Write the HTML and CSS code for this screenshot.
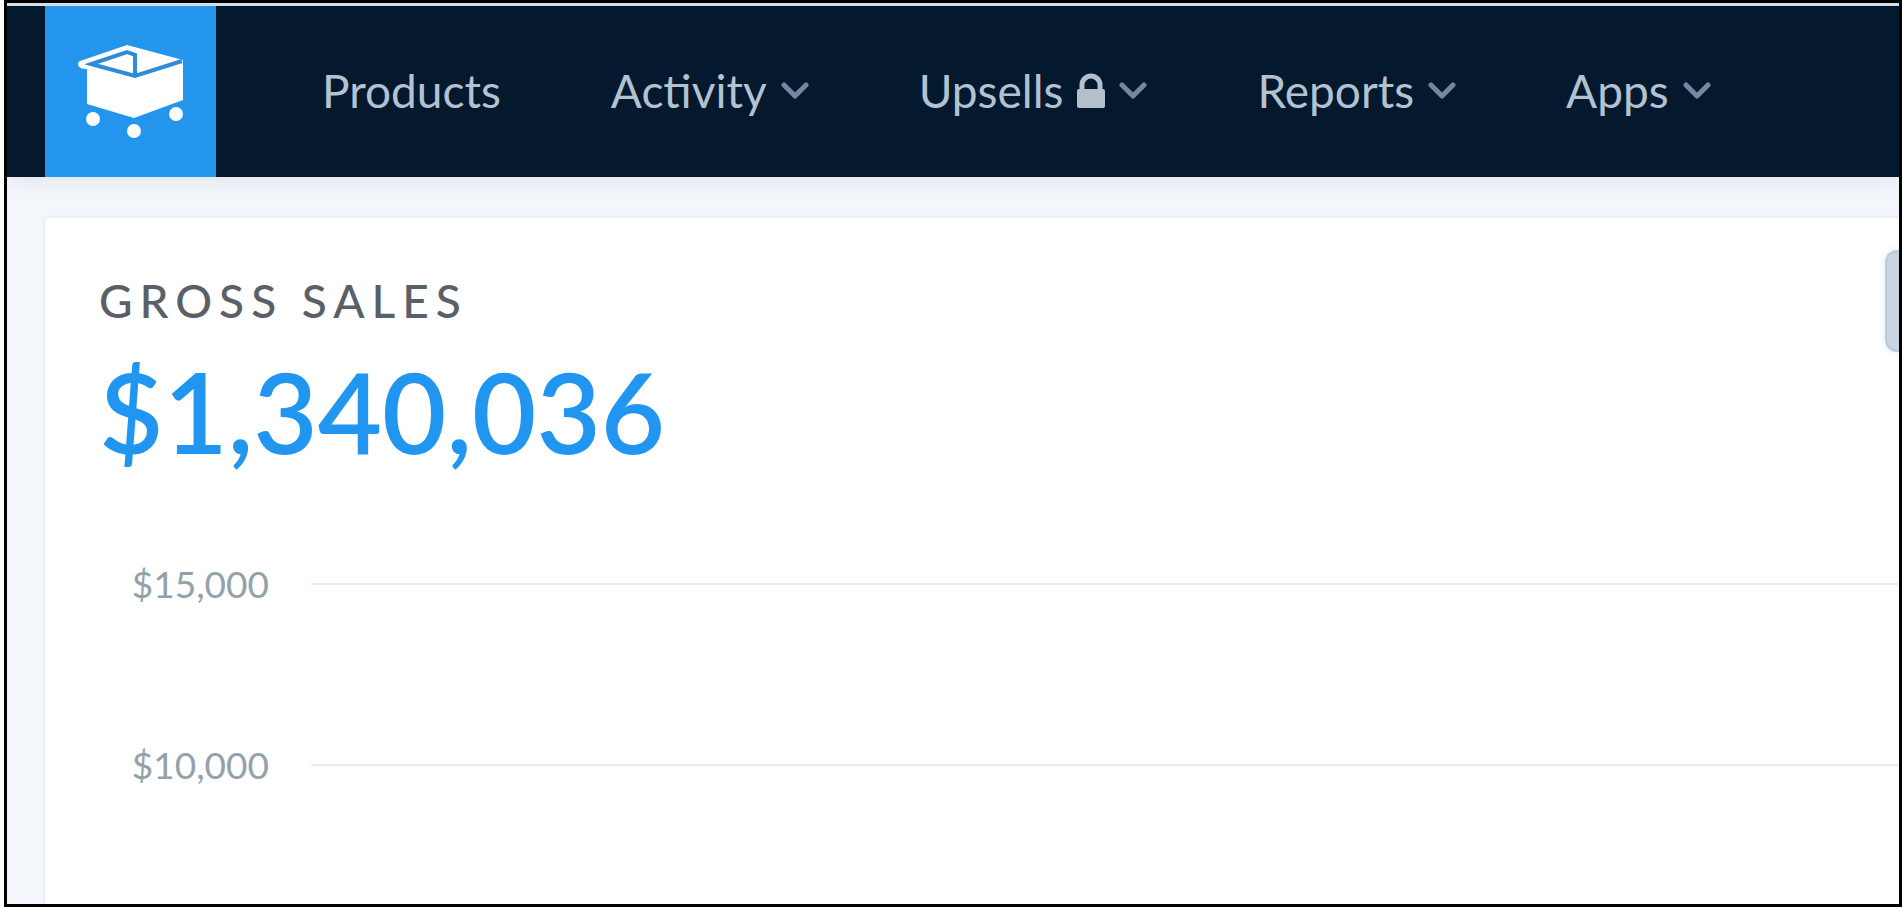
FILE: index.html
```html
<!DOCTYPE html>
<html lang="en">
<head>
    <meta charset="UTF-8">
    <meta name="viewport" content="width=device-width, initial-scale=1.0">
    <title>Gross Sales</title>
    <link rel="stylesheet" href="styles.css">
</head>
<body>
    <div class="frame">
        <!-- Top navigation -->
        <header class="navbar">
            <a class="logo" href="#" aria-label="Home">
                <svg viewBox="0 0 171 171" aria-hidden="true">
                    <path fill="#fff" d="M82 39 L138 54 L138 94 L89 112 L42 98 L42 63 Q33 63 33 58 Q33 55 38 54 Z"/>
                    <path fill="none" stroke="#2d8bd8" stroke-width="4" d="M137 55 L90 70 L46 58 L82 46 L90 49 L90 70"/>
                    <circle fill="#fff" cx="48" cy="113" r="7"/>
                    <circle fill="#fff" cx="89" cy="125" r="7"/>
                    <circle fill="#fff" cx="131" cy="108" r="7"/>
                </svg>
            </a>
            <nav class="menu">
                <a class="menu-item" href="#">Products</a>
                <button class="menu-item" type="button">Activity
                    <svg class="chevron" viewBox="0 0 28 18" aria-hidden="true"><path d="M3 3 L14 14 L25 3"/></svg>
                </button>
                <button class="menu-item" type="button">Upsells
                    <svg class="lock" viewBox="0 0 28 36" aria-hidden="true">
                        <path class="lock-bow" d="M5 18 V12 A9 9 0 0 1 23 12 V18"/>
                        <rect x="0" y="16" width="28" height="19" rx="2"/>
                    </svg>
                    <svg class="chevron" viewBox="0 0 28 18" aria-hidden="true"><path d="M3 3 L14 14 L25 3"/></svg>
                </button>
                <button class="menu-item" type="button">Reports
                    <svg class="chevron" viewBox="0 0 28 18" aria-hidden="true"><path d="M3 3 L14 14 L25 3"/></svg>
                </button>
                <button class="menu-item" type="button">Apps
                    <svg class="chevron" viewBox="0 0 28 18" aria-hidden="true"><path d="M3 3 L14 14 L25 3"/></svg>
                </button>
            </nav>
        </header>

        <!-- Sales card -->
        <main class="content">
            <section class="card">
                <div class="card-header">
                    <div>
                        <h1 class="card-title">Gross Sales</h1>
                        <p class="total">$1,340,036</p>
                    </div>
                    <button class="range-button" type="button" aria-label="Date range"></button>
                </div>
                <div class="chart">
                    <div class="chart-row">
                        <span class="chart-label">$15,000</span>
                        <span class="chart-line"></span>
                    </div>
                    <div class="chart-row">
                        <span class="chart-label">$10,000</span>
                        <span class="chart-line"></span>
                    </div>
                </div>
            </section>
        </main>
    </div>
</body>
</html>
```
FILE: styles.css
```css
* {
    box-sizing: border-box;
    margin: 0;
    padding: 0;
    font-family: Lato, sans-serif;
}
body {
    height: 100vh;
    padding: 0 0 1px 4px;
    background-color: #fff;
}
.frame {
    display: flex;
    flex-direction: column;
    height: 100%;
    border: 3px solid #000;
    background-color: #f3f6fa;
    overflow: hidden;
}
.navbar {
    display: flex;
    align-items: center;
    padding-left: 38px;
    border-top: 3px solid #d3dfe8;
    background-color: #04182e;
    box-shadow: 0 4px 20px rgba(0, 0, 0, 0.08);
}
.logo {
    width: 171px;
    height: 171px;
    background-color: #2395ec;
}
.logo svg {
    display: block;
}
.menu {
    display: flex;
    gap: 110px;
    padding: 0 0 1px 106px;
}
.menu-item {
    display: flex;
    align-items: center;
    gap: 14px;
    border: none;
    background: none;
    color: #b2c2d1;
    font-size: 46px;
    line-height: 56px;
    text-decoration: none;
    cursor: pointer;
}
.chevron {
    width: 28px;
    height: 18px;
    fill: none;
    stroke: #7388a0;
    stroke-width: 5;
    stroke-linecap: round;
    stroke-linejoin: round;
}
.lock {
    width: 28px;
    height: 36px;
    fill: #b2c0cb;
}
.lock-bow {
    fill: none;
    stroke: #b2c0cb;
    stroke-width: 5;
}
.content {
    display: flex;
    flex: 1;
    padding: 41px 0 0 38px;
}
.card {
    flex: 1;
    padding: 32px 0 0 54px;
    border-radius: 4px 0 0 0;
    background-color: #fff;
    box-shadow: 0 0 4px rgba(40, 80, 120, 0.1);
}
.card-header {
    display: flex;
    justify-content: space-between;
    align-items: flex-start;
}
.card-title {
    padding-top: 23px;
    color: #5a5f68;
    font-size: 46px;
    font-weight: 500;
    line-height: 56px;
    letter-spacing: 7px;
    text-transform: uppercase;
}
.total {
    padding-top: 18px;
    color: #2196f0;
    font-size: 111px;
    font-weight: 600;
    line-height: 128px;
}
/* runs past the right edge of the frame */
.range-button {
    width: 120px;
    height: 102px;
    margin-right: -106px;
    border: 2px solid #bccbd8;
    border-radius: 12px;
    background-color: #c9d6e1;
    box-shadow: 0 0 8px rgba(33, 150, 240, 0.15);
}
.chart {
    padding-top: 85px;
}
.chart-row {
    display: flex;
    align-items: center;
    gap: 42px;
    height: 48px;
    margin-bottom: 133px;
}
.chart-label {
    width: 170px;
    color: #93a1ad;
    font-size: 37px;
    line-height: 46px;
    text-align: right;
}
.chart-line {
    flex: 1;
    height: 2px;
    background-color: #ececee;
}
```
